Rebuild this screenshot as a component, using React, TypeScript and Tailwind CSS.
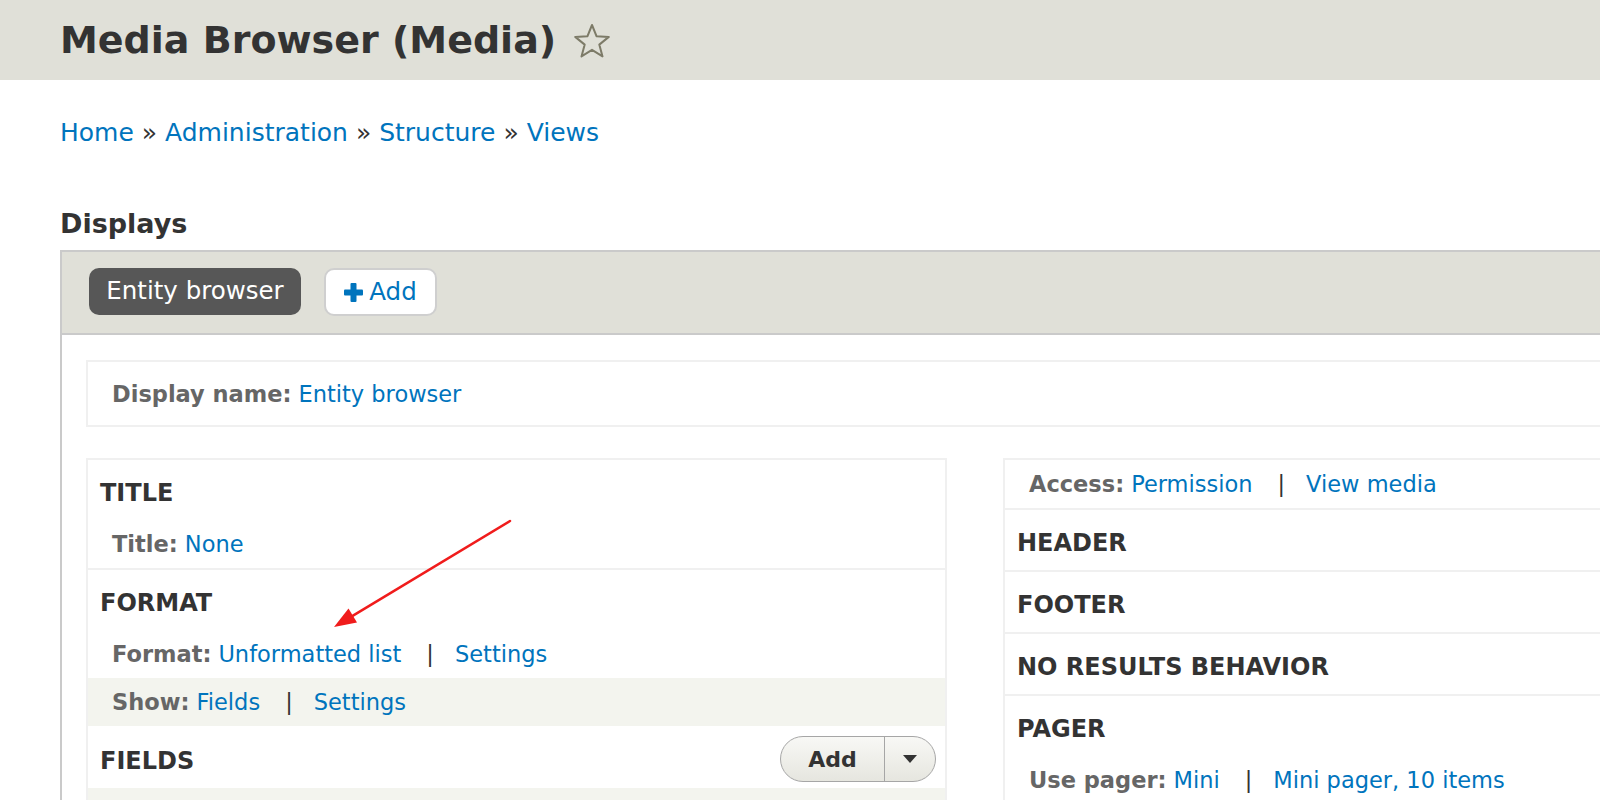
import React from "react";

const Sep = () => <span className="ml-[25px] mr-[21px] font-normal text-[#333]">|</span>;

const Setting = ({ label, children, shaded }: { label: string; children: React.ReactNode; shaded?: boolean }) => (
  <div className={`h-[48px] flex items-center pl-[24px] text-[22.5px] leading-[28px] whitespace-nowrap ${shaded ? "bg-[#f3f4ee]" : ""}`}>
    <span className="font-bold text-[#666]">{label}</span>
    <span className="w-[7px]" />
    {children}
  </div>
);

const Link = ({ children }: { children: React.ReactNode }) => <a className="text-[#0074bd]">{children}</a>;

const Heading = ({ children }: { children: React.ReactNode }) => (
  <h3 className="pl-[12px] pt-[19px] pb-[13px] text-[24px] leading-[28px] font-bold text-[#333] whitespace-nowrap">{children}</h3>
);

const Star = () => (
  <svg width="38" height="36" viewBox="0 0 38 36" className="ml-[17px] mt-[2px]">
    <polygon
      points="19,2 23.6,13.3 35.8,13.9 26.3,21.6 29.5,33.4 19,26.8 8.5,33.4 11.7,21.6 2.2,13.9 14.4,13.3"
      fill="none"
      stroke="#7d7b68"
      strokeWidth="2"
      strokeLinejoin="round"
    />
  </svg>
);

const Plus = () => (
  <svg width="19" height="19" viewBox="0 0 19 19" className="mr-[6px]">
    <rect x="6.5" y="0" width="6" height="19" rx="1" fill="#0074bd" />
    <rect x="0" y="6.5" width="19" height="6" rx="1" fill="#0074bd" />
  </svg>
);

export default function App() {
  return (
    <div className="relative w-[1600px] h-[800px] overflow-hidden bg-white font-['DejaVu_Sans',sans-serif]">
      {/* page title */}
      <header className="h-[80px] bg-[#e0e0d8] pl-[60px] flex items-center">
        <h1 className="text-[38px] leading-[44px] font-bold text-[#333]">Media Browser (Media)</h1>
        <Star />
      </header>

      {/* breadcrumb */}
      <nav className="mt-[38px] pl-[60px] text-[25px] leading-[30px] text-[#333] whitespace-nowrap">
        <Link>Home</Link> » <Link>Administration</Link> » <Link>Structure</Link> » <Link>Views</Link>
      </nav>

      <h2 className="mt-[60px] pl-[60px] text-[27px] leading-[32px] font-bold text-[#333]">Displays</h2>

      <div className="mt-[10px] ml-[60px] w-[1640px] border-l-2 border-t-2 border-[#cacaca]">
        {/* tabs */}
        <div className="bg-[#e0e0d8] border-b-2 border-[#cacaca] pt-[16px] pb-[17px] pl-[27px] flex gap-[23px]">
          <div className="h-[47px] w-[212px] rounded-[10px] bg-[#575757] text-white text-[24.5px] flex items-center justify-center">
            Entity browser
          </div>
          <div className="h-[48px] w-[113px] rounded-[10px] bg-white border-2 border-[#cfcfcf] text-[#0074bd] text-[24.5px] flex items-center justify-center">
            <Plus />
            Add
          </div>
        </div>

        {/* content */}
        <div className="pt-[25px] pl-[24px]">
          <div className="h-[67px] border-2 border-[#f0f0f0] flex items-center pl-[24px] text-[22.5px] leading-[28px] whitespace-nowrap">
            <span className="font-bold text-[#666]">Display name:</span>
            <span className="w-[7px]" />
            <Link>Entity browser</Link>
          </div>

          <div className="mt-[31px] flex gap-[56px]">
            {/* left column */}
            <div className="w-[861px] shrink-0 border-2 border-[#f0f0f0]">
              <section>
                <Heading>TITLE</Heading>
                <Setting label="Title:">
                  <Link>None</Link>
                </Setting>
              </section>
              <section className="border-t-2 border-[#f0f0f0]">
                <Heading>FORMAT</Heading>
                <Setting label="Format:">
                  <Link>Unformatted list</Link>
                  <Sep />
                  <Link>Settings</Link>
                </Setting>
                <Setting label="Show:" shaded>
                  <Link>Fields</Link>
                  <Sep />
                  <Link>Settings</Link>
                </Setting>
              </section>
              <section>
                <div className="flex items-start justify-between pr-[9px]">
                  <div className="pt-[2px]">
                    <Heading>FIELDS</Heading>
                  </div>
                  <div className="mt-[10px] h-[46px] w-[156px] flex rounded-full border border-[#a6a6a6] bg-gradient-to-b from-[#f8f8f5] to-[#e6e6df] overflow-hidden">
                    <div className="w-[103px] flex items-center justify-center text-[22px] font-bold text-[#333]">Add</div>
                    <div className="w-px bg-[#a6a6a6]" />
                    <div className="flex-1 flex items-center justify-center">
                      <svg width="14" height="8" viewBox="0 0 14 8">
                        <polygon points="0,0 14,0 7,8" fill="#333" />
                      </svg>
                    </div>
                  </div>
                </div>
                <div className="h-[60px] bg-[#f3f4ee]" />
              </section>
            </div>

            {/* right column */}
            <div className="flex-1 border-2 border-[#f0f0f0]">
              <Setting label="Access:">
                <Link>Permission</Link>
                <Sep />
                <Link>View media</Link>
              </Setting>
              <section className="border-t-2 border-[#f0f0f0]">
                <Heading>HEADER</Heading>
              </section>
              <section className="border-t-2 border-[#f0f0f0]">
                <Heading>FOOTER</Heading>
              </section>
              <section className="border-t-2 border-[#f0f0f0]">
                <Heading>NO RESULTS BEHAVIOR</Heading>
              </section>
              <section className="border-t-2 border-[#f0f0f0]">
                <Heading>PAGER</Heading>
                <Setting label="Use pager:">
                  <Link>Mini</Link>
                  <Sep />
                  <Link>Mini pager, 10 items</Link>
                </Setting>
              </section>
            </div>
          </div>
        </div>
      </div>

      {/* annotation arrow */}
      <svg className="absolute left-0 top-0 pointer-events-none" width="1600" height="800">
        <line x1="510" y1="521" x2="353" y2="615.6" stroke="#f01c1c" strokeWidth="2.5" strokeLinecap="round" />
        <polygon points="334,627 357,622.5 348.5,608.5" fill="#f01c1c" />
      </svg>
    </div>
  );
}
